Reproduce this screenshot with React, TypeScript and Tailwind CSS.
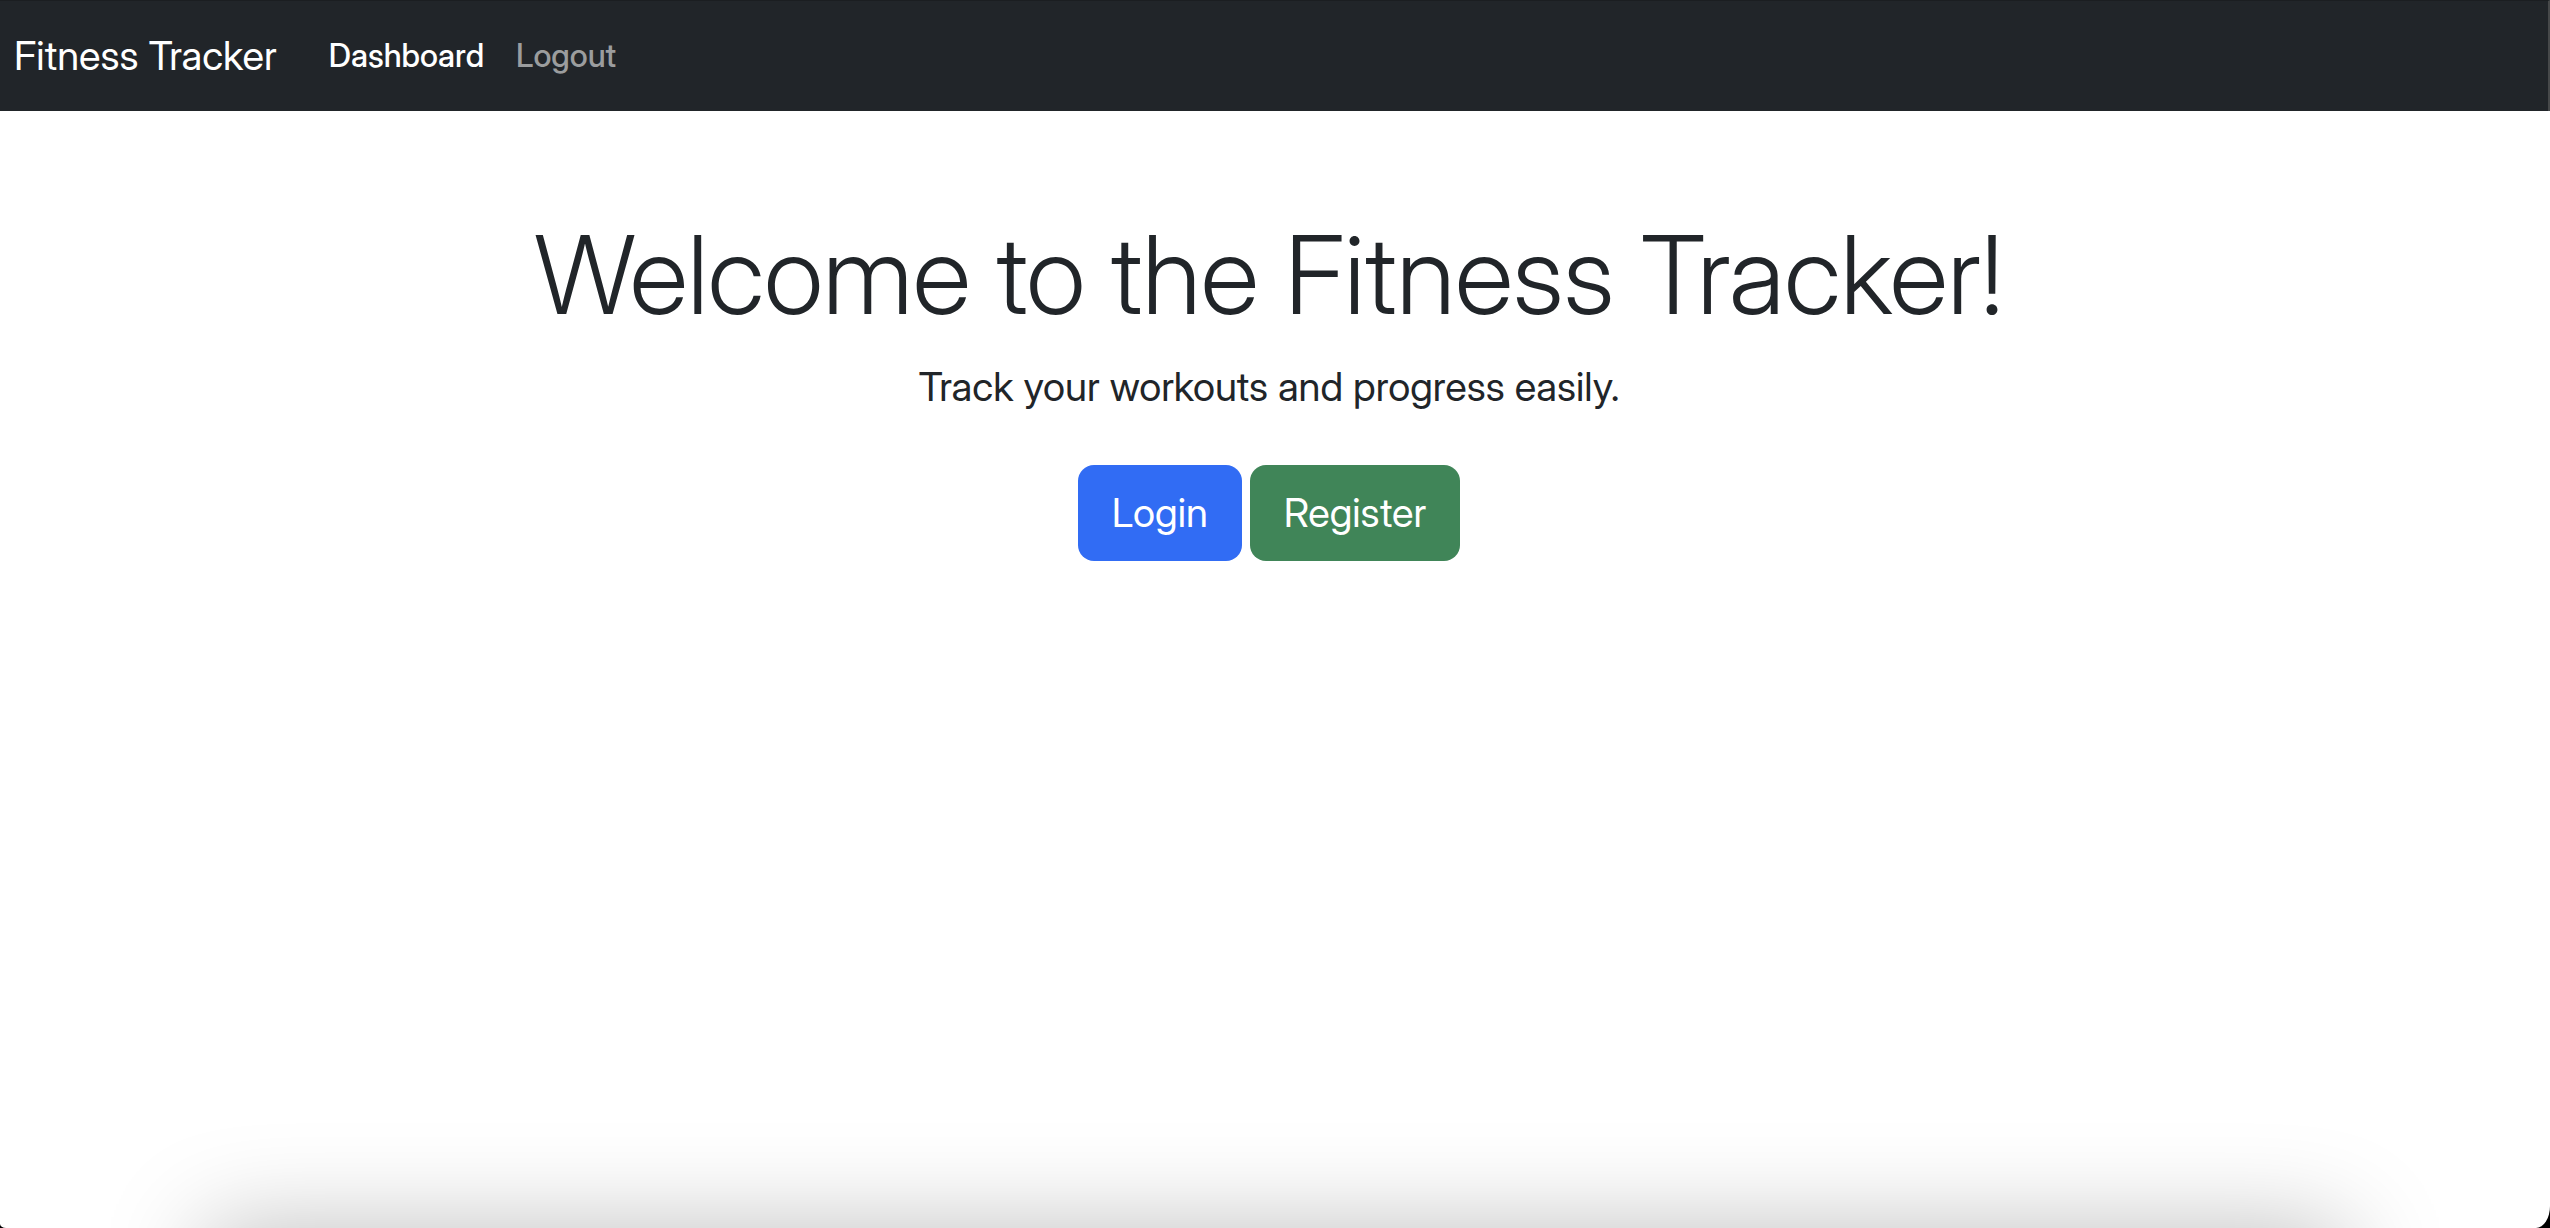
export default function App() {
  return (
    <div className="min-h-screen bg-black font-['Inter_Display','Inter',sans-serif] text-[#212529]">
      <div className="relative flex min-h-screen flex-col overflow-hidden bg-white [border-bottom-left-radius:6px_4px] [border-bottom-right-radius:14px_22px]">
        <nav className="flex h-[111px] items-center border-t border-r-2 border-t-[#1b1e21] border-r-[#464849] bg-[#212529] px-[14px]">
          <a href="#" className="mr-9 text-[40px] leading-[60px] text-white">Fitness Tracker</a>
          <div className="flex text-[32px] leading-[48px] font-medium">
            <a href="#" aria-current="page" className="px-4 text-white">Dashboard</a>
            <a href="#" className="px-4 text-[#9b9d9e]">Logout</a>
          </div>
        </nav>
        <main className="flex flex-col items-center pt-24 pr-3 text-center">
          <h1 className="text-[109px] leading-[134px] font-light">Welcome to the Fitness Tracker!</h1>
          <p className="mt-4 text-[40px] leading-[60px]">Track your workouts and progress easily.</p>
          <div className="mt-12 flex gap-2 text-[40px] leading-[60px] text-white">
            <button className="h-24 rounded-2xl bg-[#316cf4] px-[34px]">Login</button>
            <button className="h-24 rounded-2xl bg-[#408558] px-[34px]">Register</button>
          </div>
        </main>
        <div aria-hidden="true" className="pointer-events-none absolute inset-x-[205px] top-full h-[200px] shadow-[0_0_100px_rgba(0,0,0,0.26)]" />
      </div>
    </div>
  );
}
